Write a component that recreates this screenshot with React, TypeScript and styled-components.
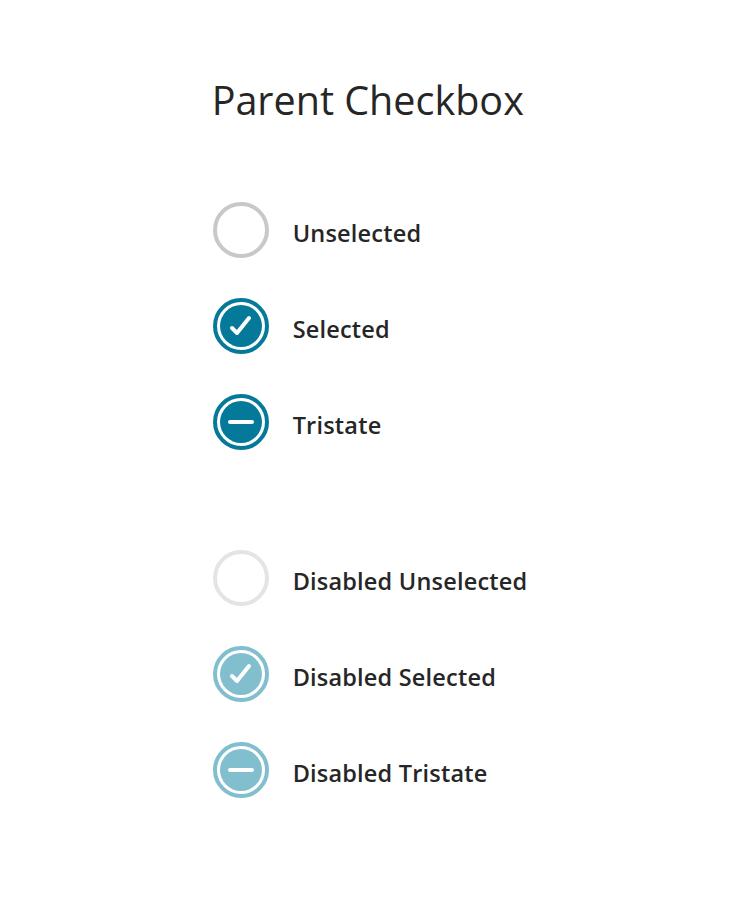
import styled, { createGlobalStyle } from 'styled-components';

const GlobalStyle = createGlobalStyle`
  body {
    margin: 0;
    background: #ffffff;
    font-family: 'Open Sans', 'Noto Sans', sans-serif;
    color: #262626;
  }
`;

type Tone = 'off' | 'on' | 'offDisabled' | 'onDisabled';

const ringColor: Record<Tone, string> = {
  off: '#c8c8c8',
  on: '#05799a',
  offDisabled: '#e4e4e4',
  onDisabled: '#82bfce',
};

const Page = styled.main`
  display: flex;
  justify-content: center;
  padding-top: 74px;
`;

const Panel = styled.section`
  display: flex;
  flex-direction: column;
`;

const Title = styled.h1`
  margin: 0 0 76px -1px;
  font-size: 39.5px;
  font-weight: 400;
  line-height: 52px;
  color: #262626;
`;

const Group = styled.div`
  display: flex;
  flex-direction: column;
  gap: 40px;

  & + & {
    margin-top: 100px;
  }
`;

const Row = styled.label`
  display: flex;
  align-items: center;
  gap: 24px;
  height: 56px;
`;

const Circle = styled.span<{ $tone: Tone; $filled: boolean }>`
  box-sizing: border-box;
  display: flex;
  align-items: center;
  justify-content: center;
  width: 56px;
  height: 56px;
  border-radius: 50%;
  border: 4px solid ${(p) => ringColor[p.$tone]};
  padding: 3px;
  background: #ffffff;
  flex-shrink: 0;

  & > span {
    width: 100%;
    height: 100%;
    border-radius: 50%;
    background: ${(p) => (p.$filled ? ringColor[p.$tone] : 'transparent')};
    display: flex;
    align-items: center;
    justify-content: center;
  }
`;

const Label = styled.span`
  padding-top: 5px;
  font-size: 23.5px;
  font-weight: 600;
  letter-spacing: 0.2px;
  color: #262626;
`;

type State = 'unselected' | 'selected' | 'tristate';

const Mark = ({ state }: { state: State }) => {
  if (state === 'selected') {
    return (
      <svg width="42" height="42" viewBox="-21 -21 42 42">
        <path
          d="M-9 2 L-4 7 L8 -8"
          fill="none"
          stroke="#fff"
          strokeWidth="4"
          strokeLinecap="round"
          strokeLinejoin="round"
        />
      </svg>
    );
  }
  if (state === 'tristate') {
    return (
      <svg width="42" height="42" viewBox="-21 -21 42 42">
        <path d="M-11 0 H11" stroke="#fff" strokeWidth="4" strokeLinecap="round" />
      </svg>
    );
  }
  return null;
};

const Checkbox = ({ state, disabled, label }: { state: State; disabled?: boolean; label: string }) => {
  const checked = state !== 'unselected';
  const tone: Tone = checked ? (disabled ? 'onDisabled' : 'on') : disabled ? 'offDisabled' : 'off';
  return (
    <Row>
      <Circle $tone={tone} $filled={checked}>
        <span>
          <Mark state={state} />
        </span>
      </Circle>
      <Label>{label}</Label>
    </Row>
  );
};

const App = () => (
  <>
    <GlobalStyle />
    <Page>
      <Panel>
        <Title>Parent Checkbox</Title>
        <Group>
          <Checkbox state="unselected" label="Unselected" />
          <Checkbox state="selected" label="Selected" />
          <Checkbox state="tristate" label="Tristate" />
        </Group>
        <Group>
          <Checkbox state="unselected" disabled label="Disabled Unselected" />
          <Checkbox state="selected" disabled label="Disabled Selected" />
          <Checkbox state="tristate" disabled label="Disabled Tristate" />
        </Group>
      </Panel>
    </Page>
  </>
);

export default App;
